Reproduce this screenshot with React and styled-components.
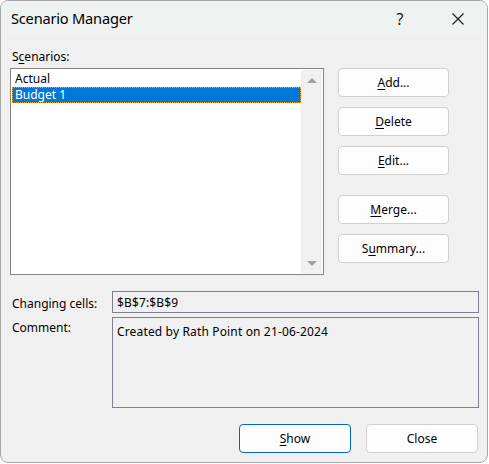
import React from "react";
import styled, { createGlobalStyle } from "styled-components";

const Global = createGlobalStyle`
  html, body { margin: 0; padding: 0; background: #ffffff; }
  body { font-family: "Noto Sans", "Segoe UI", sans-serif; font-size: 12px; color: #000; }
  * { box-sizing: border-box; }
`;

const Dialog = styled.div`
  width: 488px;
  height: 463px;
  border: 1px solid #a8a8a8;
  border-radius: 8px;
  overflow: hidden;
  background: #f0f0f0;
  display: flex;
  flex-direction: column;
`;

const TitleBar = styled.div`
  height: 35px;
  background: #eef3f1;
  display: flex;
  align-items: center;
  padding-left: 10px;
`;

const Title = styled.div`
  flex: 1;
  font-size: 14.6px;
  letter-spacing: -0.2px;
  padding-bottom: 1px;
`;

const TitleButton = styled.div`
  width: ${(p) => p.$w}px;
  height: 35px;
  display: flex;
  align-items: center;
  justify-content: center;
  font-size: 16px;
  color: #1a1a1a;
`;

const Spacer = styled.div`
  width: 11px;
`;

const Body = styled.div`
  flex: 1;
  padding: 12px 8px 0 9px;
  display: flex;
  flex-direction: column;
`;

const TopSection = styled.div`
  display: flex;
  gap: 14px;
`;

const LeftCol = styled.div`
  width: 314px;
  display: flex;
  flex-direction: column;
`;

const Label = styled.div`
  height: 17px;
  line-height: 18px;
  padding-left: 2px;
  margin-bottom: 3px;
  white-space: nowrap;
`;

const Key = styled.span`
  text-decoration: underline;
  text-underline-offset: 2px;
`;

const ListBox = styled.div`
  height: 207px;
  border: 1px solid #838383;
  background: #fff;
  display: flex;
  padding: 1px;
`;

const Items = styled.div`
  flex: 1;
  padding-top: 1px;
`;

const Item = styled.div`
  height: 16px;
  line-height: 16px;
  padding-left: 3px;
  background: ${(p) => (p.$sel ? "#0078d7" : "transparent")};
  color: ${(p) => (p.$sel ? "#fff" : "#000")};
  outline: ${(p) => (p.$sel ? "1px dotted #f59a23" : "none")};
  outline-offset: -1px;
`;

const ScrollBar = styled.div`
  width: 21px;
  background: #f0f0f0;
  display: flex;
  flex-direction: column;
  justify-content: space-between;
  align-items: center;
  padding: 8px 0 7px;
`;

const Arrow = styled.div`
  width: 0;
  height: 0;
  border-left: 5px solid transparent;
  border-right: 5px solid transparent;
  ${(p) => (p.$down ? "border-top: 5px solid #a3a3a3;" : "border-bottom: 5px solid #a3a3a3;")}
`;

const ButtonCol = styled.div`
  padding-top: 20px;
  display: flex;
  flex-direction: column;
`;

const Button = styled.div`
  width: ${(p) => p.$w || 111}px;
  height: 29px;
  margin-top: ${(p) => p.$mt || 0}px;
  border: 1px solid ${(p) => (p.$default ? "#0067c0" : "#d0d0d0")};
  border-radius: 4px;
  background: #fdfdfd;
  display: flex;
  align-items: center;
  justify-content: center;
  padding-bottom: 1px;
`;

const FieldRow = styled.div`
  display: flex;
  margin-top: ${(p) => p.$mt}px;
`;

const FieldLabel = styled.div`
  width: 102px;
  padding-left: 2px;
  padding-top: ${(p) => p.$pt}px;
  line-height: 16px;
`;

const Field = styled.div`
  flex: 1;
  height: ${(p) => p.$h}px;
  border: 1px solid #7f7f90;
  background: #f0f0f0;
  padding: ${(p) => p.$pt}px 4px 0;
  line-height: 16px;
  letter-spacing: 0.15px;
`;

const Footer = styled.div`
  display: flex;
  justify-content: flex-end;
  gap: 15px;
  margin-top: 16px;
  padding-right: 1px;
`;

export default function App() {
  return (
    <>
      <Global />
      <Dialog>
        <TitleBar>
          <Title>Scenario Manager</Title>
          <TitleButton $w={80}>?</TitleButton>
          <TitleButton $w={36}>
            <svg width="12" height="12" viewBox="0 0 12 12">
              <path d="M0.5 0.5 L11.5 11.5 M11.5 0.5 L0.5 11.5" stroke="#1a1a1a" strokeWidth="1.1" fill="none" />
            </svg>
          </TitleButton>
          <Spacer />
        </TitleBar>
        <Body>
          <TopSection>
            <LeftCol>
              <Label>
                S<Key>c</Key>enarios:
              </Label>
              <ListBox>
                <Items>
                  <Item>Actual</Item>
                  <Item $sel>Budget 1</Item>
                </Items>
                <ScrollBar>
                  <Arrow />
                  <Arrow $down />
                </ScrollBar>
              </ListBox>
            </LeftCol>
            <ButtonCol>
              <Button>
                <span><Key>A</Key>dd...</span>
              </Button>
              <Button $mt={10}>
                <span><Key>D</Key>elete</span>
              </Button>
              <Button $mt={10}>
                <span><Key>E</Key>dit...</span>
              </Button>
              <Button $mt={20}>
                <span><Key>M</Key>erge...</span>
              </Button>
              <Button $mt={10}>
                <span>S<Key>u</Key>mmary...</span>
              </Button>
            </ButtonCol>
          </TopSection>
          <FieldRow $mt={16}>
            <FieldLabel $pt={5}>Changing cells:</FieldLabel>
            <Field $h={22} $pt={3}>$B$7:$B$9</Field>
          </FieldRow>
          <FieldRow $mt={4}>
            <FieldLabel $pt={3}>Comment:</FieldLabel>
            <Field $h={91} $pt={6}>Created by Rath Point on 21-06-2024</Field>
          </FieldRow>
          <Footer>
            <Button $w={112} $default>
              <span><Key>S</Key>how</span>
            </Button>
            <Button $w={112}>Close</Button>
          </Footer>
        </Body>
      </Dialog>
    </>
  );
}
